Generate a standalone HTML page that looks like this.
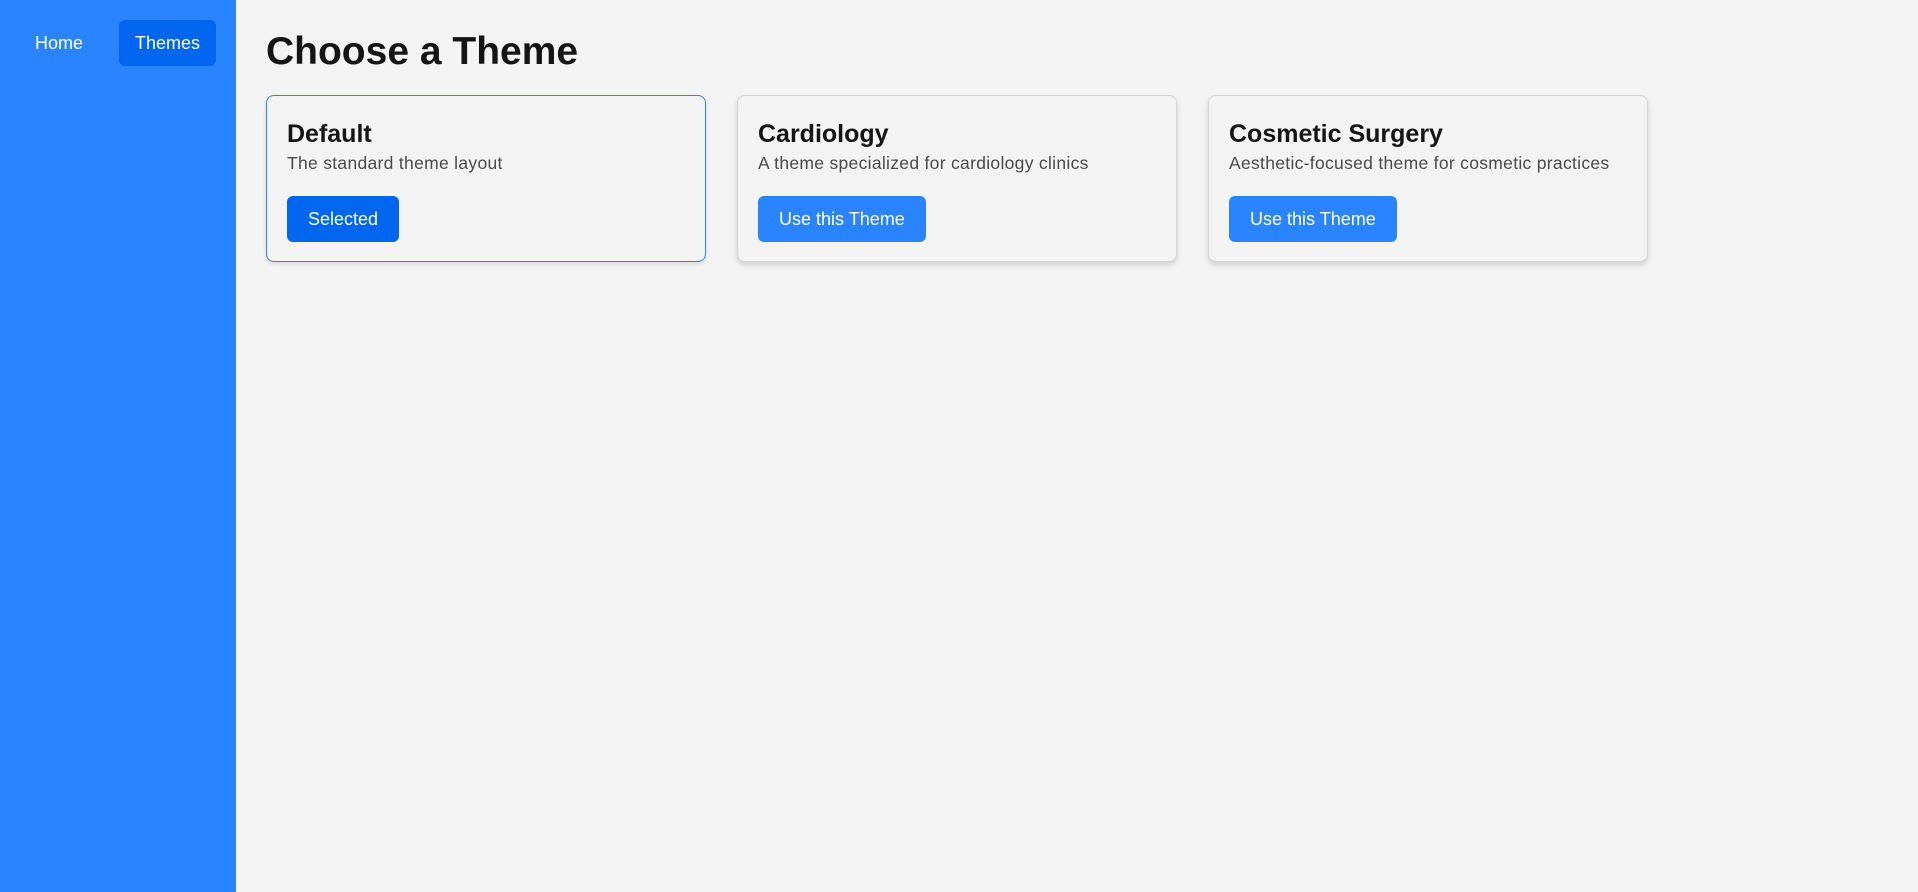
<!DOCTYPE html>
<html><head><meta charset="utf-8"><style>
*{margin:0;padding:0;box-sizing:border-box}
body{width:1918px;height:892px;background:#f4f4f4;font-family:"Liberation Sans",sans-serif;position:relative;overflow:hidden}
.side{position:absolute;left:0;top:0;width:236px;height:892px;background:#2a84ff}
.nav{position:absolute;color:#fff;font-size:18px;line-height:46px;height:46px;top:20px}
.home{left:35px}
.themes{left:119px;width:97px;background:#0066f0;border-radius:6px;text-align:center}
h1{position:absolute;left:266px;top:30px;font-size:39px;font-weight:bold;color:#151515;letter-spacing:0}
.card{position:absolute;top:95px;width:440px;height:167px;border:1px solid #d6d6d6;border-radius:8px;background:#f4f4f4;box-shadow:0 3px 6px rgba(0,0,0,.15)}
.card.sel{border-color:#2a84ff;box-shadow:0 2px 5px rgba(0,0,0,.1)}
.card h2{position:absolute;left:20px;top:24px;font-size:25px;font-weight:bold;color:#151515}
.card p{position:absolute;left:20px;top:57px;font-size:17.5px;color:#4a4a4a;white-space:nowrap;letter-spacing:0.3px}
.btn{position:absolute;left:20px;top:100px;height:46px;line-height:46px;padding:0 21px;border-radius:6px;background:#2a84ff;color:#fff;font-size:18px}
.sel .btn{background:#0066f0}
</style></head><body>
<div class="side"></div>
<div class="nav home">Home</div>
<div class="nav themes">Themes</div>
<h1>Choose a Theme</h1>
<div class="card sel" style="left:266px"><h2>Default</h2><p>The standard theme layout</p><div class="btn">Selected</div></div>
<div class="card" style="left:737px"><h2>Cardiology</h2><p>A theme specialized for cardiology clinics</p><div class="btn">Use this Theme</div></div>
<div class="card" style="left:1208px"><h2>Cosmetic Surgery</h2><p>Aesthetic-focused theme for cosmetic practices</p><div class="btn">Use this Theme</div></div>
</body></html>
